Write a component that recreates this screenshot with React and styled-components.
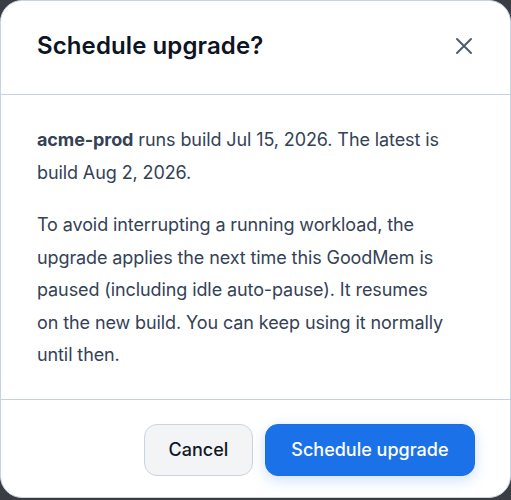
import styled, { createGlobalStyle } from "styled-components";

const GlobalStyle = createGlobalStyle`
  html, body {
    margin: 0;
    padding: 0;
    background: #3a3d44;
  }
  * {
    box-sizing: border-box;
  }
`;

const Dialog = styled.div`
  width: 511px;
  height: 498px;
  background: #ffffff;
  border: 1px solid #c9d4e1;
  border-radius: 22px;
  display: flex;
  flex-direction: column;
  overflow: hidden;
  font-family: Inter, "Noto Sans", sans-serif;
`;

const Header = styled.div`
  height: 94px;
  display: flex;
  align-items: center;
  justify-content: space-between;
  padding: 0 34px 0 36px;
  border-bottom: 1px solid #c7d1dd;
`;

const Title = styled.h2`
  margin: 0 0 4px;
  font-size: 24px;
  font-weight: 600;
  color: #0d1424;
  letter-spacing: 0.1px;
`;

const CloseButton = styled.button`
  border: none;
  background: none;
  padding: 0;
  width: 24px;
  height: 24px;
  display: flex;
  align-items: center;
  justify-content: center;
  color: #4e5d72;
  cursor: pointer;
  margin-bottom: 4px;
`;

const Body = styled.div`
  flex: 1;
  padding: 29px 36px 0;
  border-bottom: 1px solid #c7d1dd;
`;

const Paragraph = styled.p`
  margin: 0 0 20px;
  font-size: 18px;
  line-height: 32.5px;
  color: #344256;
  letter-spacing: -0.1px;
`;

const Strong = styled.strong`
  font-weight: 700;
`;

const Footer = styled.div`
  height: 97px;
  display: flex;
  align-items: center;
  justify-content: flex-end;
  gap: 12px;
  padding: 2px 35px 0 0;
`;

const Button = styled.button`
  height: 52px;
  border-radius: 13px;
  font-family: Inter, "Noto Sans", sans-serif;
  font-size: 18px;
  font-weight: 500;
  padding: 0 ${({ $primary }) => ($primary ? "25.5px" : "23.5px")};
  cursor: pointer;
  border: 1px solid ${({ $primary }) => ($primary ? "#1a6fe0" : "#c9d4e2")};
  background: ${({ $primary }) => ($primary ? "#1b72e8" : "#f3f4f6")};
  color: ${({ $primary }) => ($primary ? "#ffffff" : "#111827")};
  box-shadow: ${({ $primary }) =>
    $primary ? "0 4px 14px rgba(27, 114, 232, 0.22)" : "none"};
`;

export default function App() {
  return (
    <>
      <GlobalStyle />
      <Dialog>
        <Header>
          <Title>Schedule upgrade?</Title>
          <CloseButton aria-label="Close">
            <svg width="18" height="18" viewBox="0 0 18 18" fill="none">
              <path
                d="M2 2L16 16M16 2L2 16"
                stroke="currentColor"
                strokeWidth="2"
                strokeLinecap="round"
              />
            </svg>
          </CloseButton>
        </Header>
        <Body>
          <Paragraph>
            <Strong>acme-prod</Strong> runs build Jul 15, 2026. The latest is
            build Aug 2, 2026.
          </Paragraph>
          <Paragraph>
            To avoid interrupting a running workload, the
            <br />
            upgrade applies the next time this GoodMem is
            <br />
            paused (including idle auto-pause). It resumes
            <br />
            on the new build. You can keep using it normally
            <br />
            until then.
          </Paragraph>
        </Body>
        <Footer>
          <Button>Cancel</Button>
          <Button $primary>Schedule upgrade</Button>
        </Footer>
      </Dialog>
    </>
  );
}
